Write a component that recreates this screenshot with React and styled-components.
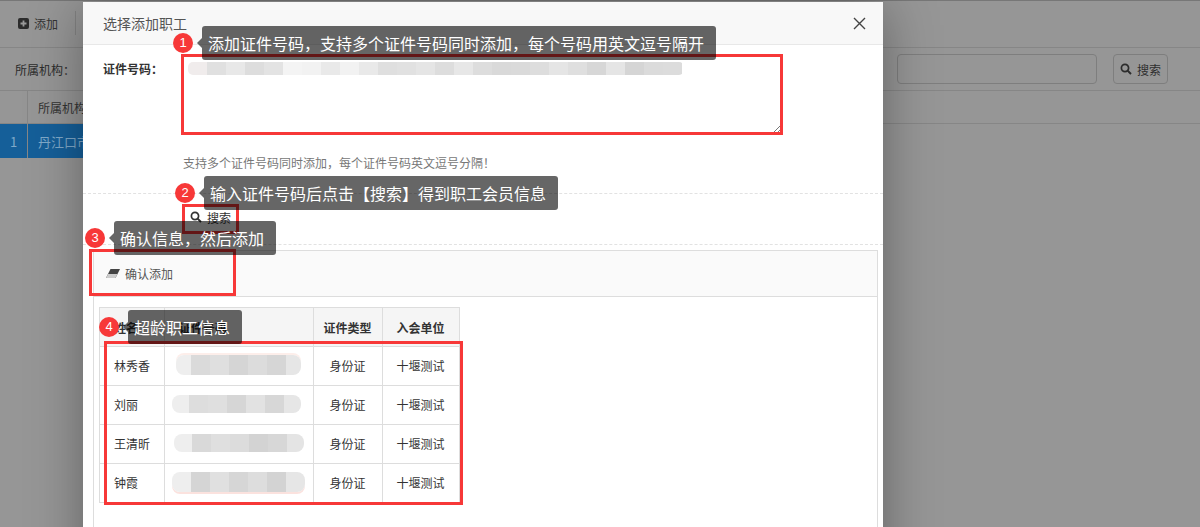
import React from "react";
import styled, { createGlobalStyle } from "styled-components";

const Global = createGlobalStyle`
  html, body { margin: 0; padding: 0; height: 527px; overflow: hidden; background: #969696; }
  * { box-sizing: border-box; }
  body { font-family: "Noto Sans CJK SC", "Liberation Sans", sans-serif; font-size: 12px; color: #333; }
`;

const Page = styled.div`
  position: relative;
  width: 1200px;
  height: 527px;
  overflow: hidden;
  background: #969696;
`;
const TopBar = styled.div`
  height: 48px;
  padding: 0 0 2px 18px;
  border-top: 1px solid #777;
  border-bottom: 1px solid #868686;
  display: flex;
  align-items: center;
  gap: 17px;
  color: #333;
`;
const AddLabel = styled.span`
  display: flex;
  align-items: center;
  gap: 5px;
`;
const Divider = styled.span`
  width: 1px;
  height: 24px;
  background: #838383;
`;
const FilterRow = styled.div`
  height: 43px;
  border-bottom: 1px solid #868686;
  display: flex;
  align-items: center;
  padding: 0 0 0 15px;
  color: #2c2c2c;
`;
const FilterRight = styled.div`
  margin-left: auto;
  display: flex;
  align-items: center;
  padding-right: 32px;
`;
const FilterInput = styled.div`
  width: 200px;
  height: 30px;
  margin-right: 16px;
  border: 1px solid #7e7e7e;
  border-radius: 4px;
`;
const GhostButton = styled.div`
  width: 55px;
  height: 30px;
  border: 1px solid #7e7e7e;
  border-radius: 4px;
  display: flex;
  align-items: center;
  justify-content: center;
  gap: 5px;
  color: #2f2f2f;
`;
const GridHead = styled.div`
  height: 33px;
  border-bottom: 1px solid #868686;
  display: flex;
  align-items: center;
`;
const IndexCell = styled.div`
  width: 28px;
  height: 100%;
  border-right: 1px solid #868686;
  display: flex;
  align-items: center;
  justify-content: center;
`;
const NameCell = styled.div`
  padding-left: 10px;
  white-space: nowrap;
`;
const SelectedRow = styled.div`
  width: 90px;
  height: 34px;
  background: #155f99;
  color: #7fa9c9;
  display: flex;
  align-items: center;
  font-size: 13px;
`;
const Modal = styled.div`
  position: absolute;
  left: 83px;
  top: 2px;
  width: 800px;
  height: 600px;
  background: #fff;
  box-shadow: 0 5px 50px rgba(0, 0, 0, 0.35);
  display: flex;
  flex-direction: column;
`;
const ModalHeader = styled.div`
  height: 43px;
  background: #f8f8f8;
  border-bottom: 1px solid #e8e8e8;
  display: flex;
  align-items: center;
  justify-content: space-between;
  padding: 0 17px 0 20px;
  font-size: 14px;
  color: #555;
  flex: none;
`;
const FormRow = styled.div`
  display: flex;
  padding: 10px 0 0 20px;
  flex: none;
`;
const FieldLabel = styled.label`
  width: 80px;
  padding-top: 5px;
  font-weight: 700;
  color: #333;
`;
const CodeBox = styled.div`
  position: relative;
  width: 599px;
  height: 78px;
  background: #fff;
  padding-top: 7px;
`;
const Resizer = styled.svg`
  position: absolute;
  right: 0;
  bottom: 0;
`;
const Hint = styled.div`
  padding: 21px 0 0 100px;
  height: 61px;
  border-bottom: 1px dashed #e2e2e2;
  color: #777;
  line-height: 17px;
  flex: none;
`;
const SearchRow = styled.div`
  height: 51px;
  padding: 10px 0 0 100px;
  border-bottom: 1px dashed #e2e2e2;
  flex: none;
`;
const PlainSearch = styled.div`
  width: 55px;
  height: 26px;
  display: flex;
  align-items: center;
  justify-content: center;
  gap: 5px;
  color: #333;
`;
const Panel = styled.div`
  margin: 5px 5px 0 10px;
  border: 1px solid #ddd;
  flex: 1;
`;
const PanelBar = styled.div`
  height: 46px;
  background: #fafafa;
  border-bottom: 1px solid #ddd;
  display: flex;
  align-items: center;
  gap: 5px;
  padding-left: 12px;
  color: #555;
`;
const Table = styled.table`
  margin: 10px 0 0 5px;
  border-collapse: collapse;
  table-layout: fixed;
  width: 360px;
`;
const Th = styled.th`
  height: 39px;
  border: 1px solid #ddd;
  background: #f5f5f5;
  font-weight: 700;
  color: #333;
  padding: ${(p) => (p.$align === "left" ? "0 0 0 14px" : "0 1px 0 0")};
  text-align: ${(p) => p.$align || "center"};
`;
const Td = styled.td`
  height: 39px;
  border: 1px solid #ddd;
  padding: ${(p) => (p.$align === "left" ? "0 0 2px 14px" : "0 1px 2px 0")};
  text-align: ${(p) => p.$align || "center"};
  color: #333;
`;
const Smear = styled.div`
  display: flex;
  height: ${(p) => p.$h}px;
  margin-left: ${(p) => p.$x}px;
  border-radius: ${(p) => p.$r}px;
  overflow: hidden;
  width: ${(p) => p.$w}px;
  box-shadow: ${(p) => p.$tint || "none"};
`;
const SmearCell = styled.span`
  flex: ${(p) => (p.$edge ? "1 1 0" : "0 0 19px")};
  background: ${(p) => p.$c};
`;
const Callout = styled.div`
  position: absolute;
  left: ${(p) => p.$x}px;
  top: ${(p) => p.$y}px;
  width: ${(p) => p.$w}px;
  height: 34px;
  border-radius: 3px;
  background: rgba(0, 0, 0, 0.6);
  color: #fff;
  font-size: 16px;
  line-height: 34px;
  padding-left: 6px;
  white-space: nowrap;
  &::before {
    content: "";
    position: absolute;
    left: -5px;
    top: 12px;
    border: 5px solid transparent;
    border-left: 0;
    border-right-color: rgba(0, 0, 0, 0.6);
  }
`;
const Badge = styled.div`
  position: absolute;
  left: ${(p) => p.$x}px;
  top: ${(p) => p.$y}px;
  width: 20px;
  height: 20px;
  border-radius: 50%;
  background: #f73838;
  color: #fff;
  font-size: 13px;
  line-height: 20px;
  text-align: center;
  font-family: "Liberation Sans", sans-serif;
`;
const Mark = styled.div`
  position: absolute;
  left: ${(p) => p.$x}px;
  top: ${(p) => p.$y}px;
  width: ${(p) => p.$w}px;
  height: ${(p) => p.$h}px;
  border: 3px solid #f73838;
`;

const SearchIcon = ({ color = "#333" }) => (
  <svg width="12" height="12" viewBox="0 0 12 12" fill="none">
    <circle cx="5" cy="5" r="3.6" stroke={color} strokeWidth="1.7" />
    <path d="M7.6 7.6 11 11" stroke={color} strokeWidth="2" />
  </svg>
);

const shades = [
  ["#eee", "#dadada", "#dfdfdf", "#d5d5d5", "#dcdcdc", "#d6d6d6", "#e6e6e6"],
  ["#eee", "#dddddd", "#dfdfdf", "#d6d6d6", "#e2e2e2", "#d7d7d7", "#e6e6e6"],
  ["#eee", "#d9d9d9", "#dfdfdf", "#dcdcdc", "#d3d3d3", "#d7d7d7", "#e4e4e4"],
  ["#eee", "#d5d5d5", "#e0e0e0", "#d6d6d6", "#dddddd", "#d3d3d3", "#e6e6e6"],
];
const rows = [
  { name: "林秀香", x: 11, w: 125, h: 20, tint: "0 -2px 0 #fdeeea" },
  { name: "刘丽", x: 7, w: 129, h: 18 },
  { name: "王清昕", x: 9, w: 130, h: 18 },
  { name: "钟霞", x: 7, w: 133, h: 20, tint: "0 2px 0 #fbe2de" },
];
const topSmear = [
  "#f0ecec", "#e0e0e0", "#e8e8e8", "#dddddd", "#e3e3e3", "#f4f4f4", "#f2f2f2", "#e9e9e9", "#f2f2f2",
  "#e9e9e9", "#dfdfdf", "#e1e1e1", "#e5e5e5", "#dddddd", "#e7e7e7", "#dddddd", "#d9d9d9", "#dadada",
  "#dddddd", "#e5e5e5", "#dfdfdf", "#d7d7d7", "#e5e5e5", "#d5d5d5", "#dbdbdb", "#dcdcdc",
];

export default function App() {
  return (
    <Page>
      <Global />
      <TopBar>
        <AddLabel>
          <svg width="11" height="11" viewBox="0 0 11 11">
            <rect width="11" height="11" rx="2" fill="#2c2c2c" />
            <path d="M5.5 2.5v6M2.5 5.5h6" stroke="#999" strokeWidth="1.8" />
          </svg>
          添加
        </AddLabel>
        <Divider />
      </TopBar>
      <FilterRow>
        <span>所属机构：</span>
        <FilterRight>
          <FilterInput />
          <GhostButton>
            <SearchIcon color="#2c2c2c" />
            搜索
          </GhostButton>
        </FilterRight>
      </FilterRow>
      <GridHead>
        <IndexCell />
        <NameCell>所属机构</NameCell>
      </GridHead>
      <SelectedRow>
        <IndexCell>1</IndexCell>
        <NameCell>丹江口市</NameCell>
      </SelectedRow>

      <Modal>
        <ModalHeader>
          <span>选择添加职工</span>
          <svg width="13" height="13" viewBox="0 0 13 13" fill="none">
            <path d="M1 1l11 11M12 1 1 12" stroke="#444" strokeWidth="1.4" />
          </svg>
        </ModalHeader>
        <FormRow>
          <FieldLabel>证件号码：</FieldLabel>
          <CodeBox>
            <Smear $x={5} $w={496} $h={13} $r={5}>
              {topSmear.map((c, i) => (
                <SmearCell key={i} $c={c} />
              ))}
            </Smear>
            <Resizer width="9" height="9" viewBox="0 0 9 9" fill="none">
              <path d="M1 8 8 1M5 8l3-3" stroke="#777" strokeWidth="1" />
            </Resizer>
          </CodeBox>
        </FormRow>
        <Hint>支持多个证件号码同时添加，每个证件号码英文逗号分隔！</Hint>
        <SearchRow>
          <PlainSearch>
            <SearchIcon />
            搜索
          </PlainSearch>
        </SearchRow>
        <Panel>
          <PanelBar>
            <svg width="14" height="9" viewBox="0 0 14 9">
              <path d="M4.5 0H14L9.5 9H0z" fill="#444" />
              <path d="M2 5h9.5L9.5 9H0z" fill="#ccc" />
            </svg>
            确认添加
          </PanelBar>
          <Table>
            <colgroup>
              <col width="65" />
              <col width="149" />
              <col width="69" />
              <col width="77" />
            </colgroup>
            <thead>
              <tr>
                <Th $align="left">姓名</Th>
                <Th $align="left">证件号码</Th>
                <Th>证件类型</Th>
                <Th>入会单位</Th>
              </tr>
            </thead>
            <tbody>
              {rows.map((r, i) => (
                <tr key={r.name}>
                  <Td $align="left">{r.name}</Td>
                  <Td>
                    <Smear $x={r.x} $w={r.w} $h={r.h} $r={8} $tint={r.tint}>
                      {shades[i].map((c, j) => (
                        <SmearCell key={j} $c={c} $edge={j === 0 || j === 6} />
                      ))}
                    </Smear>
                  </Td>
                  <Td>身份证</Td>
                  <Td>十堰测试</Td>
                </tr>
              ))}
            </tbody>
          </Table>
        </Panel>
      </Modal>

      <Mark $x={181} $y={54} $w={602} $h={81} />
      <Mark $x={182} $y={204} $w={57} $h={30} />
      <Mark $x={89} $y={249} $w={147} $h={47} />
      <Mark $x={104} $y={341} $w={359} $h={164} />

      <Callout $x={202} $y={26} $w={514}>添加证件号码，支持多个证件号码同时添加，每个号码用英文逗号隔开</Callout>
      <Badge $x={173} $y={33}>1</Badge>
      <Callout $x={204} $y={176} $w={354}>输入证件号码后点击【搜索】得到职工会员信息</Callout>
      <Badge $x={175} $y={183}>2</Badge>
      <Callout $x={114} $y={221} $w={162}>确认信息，然后添加</Callout>
      <Badge $x={85} $y={228}>3</Badge>
      <Callout $x={128} $y={310} $w={114}>超龄职工信息</Callout>
      <Badge $x={99} $y={317}>4</Badge>
    </Page>
  );
}
